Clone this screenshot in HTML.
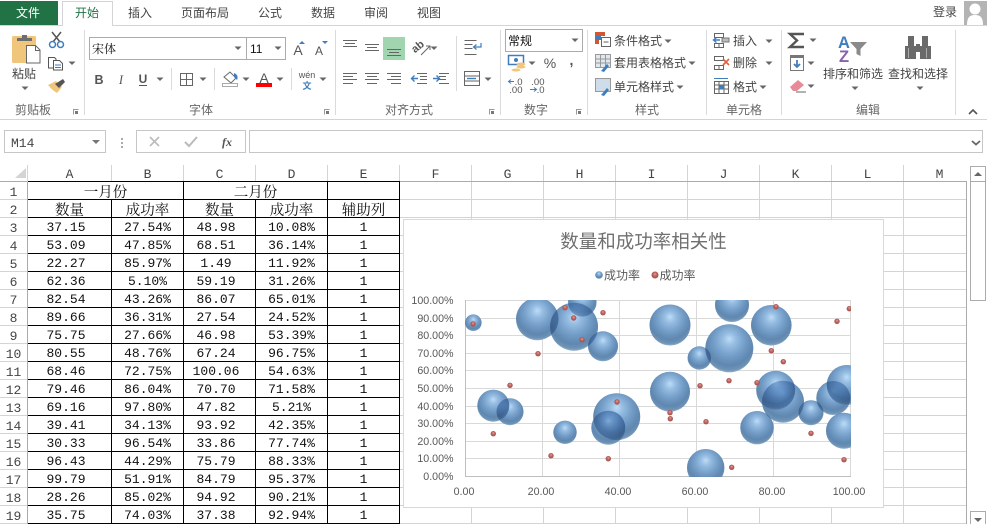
<!DOCTYPE html>
<html lang="zh"><head><meta charset="utf-8"><title>Excel</title>
<style>
html,body{margin:0;padding:0;background:#fff;overflow:hidden}
#p{position:relative;width:987px;height:524px;overflow:hidden;background:#fff;font-family:"Liberation Sans","Noto Sans CJK SC",sans-serif}
svg{position:absolute;left:0;top:0}
#g{position:absolute;left:400px;top:182px;width:566px;height:342px;background:linear-gradient(to bottom,transparent 17px,#d4d4d4 17px) 0 0/100% 18px,linear-gradient(to right,transparent 71px,#d4d4d4 71px) 0 0/72px 100%}
#r{position:absolute;left:0;top:182px;width:27px;height:342px;overflow:hidden}
#r div{height:18px;box-sizing:border-box;border-bottom:1px solid #d4d4d4;text-align:center;font:13px/21px "Liberation Mono",monospace;color:#444}
table{position:absolute;left:27px;top:181px;width:373px;box-sizing:border-box;table-layout:fixed;border-collapse:separate;border-spacing:0;border-left:1px solid #000;border-top:1px solid #000;background:#fff}
tr{height:18px}
td{height:18px;box-sizing:border-box;padding:3px 0 0;border-right:1px solid #000;border-bottom:1px solid #000;text-align:center;font:13px/14px "Liberation Mono",monospace;color:#111;overflow:hidden;white-space:nowrap}
td.n{padding-right:7px}
td.h{font:14.5px/15px "Noto Serif CJK SC",serif;padding-top:2px}
text{font-family:"Liberation Sans","Noto Sans CJK SC",sans-serif}
.t{font-size:12px;fill:#444}
.m{font-family:"Liberation Mono",monospace;font-size:13px;fill:#444}
.a{font-size:10.67px;fill:#595959}
#bub circle{mix-blend-mode:multiply}
</style></head><body><div id="p">
<div id="g"></div>
<div id="r"><div>1</div><div>2</div><div>3</div><div>4</div><div>5</div><div>6</div><div>7</div><div>8</div><div>9</div><div>10</div><div>11</div><div>12</div><div>13</div><div>14</div><div>15</div><div>16</div><div>17</div><div>18</div><div>19</div></div>
<table><colgroup><col style="width:84px"><col style="width:72px"><col style="width:72px"><col style="width:72px"><col style="width:72px"></colgroup>
<tr><td class="h" colspan="2">一月份</td><td class="h" colspan="2">二月份</td><td></td></tr>
<tr><td class="h">数量</td><td class="h">成功率</td><td class="h">数量</td><td class="h">成功率</td><td class="h">辅助列</td></tr>
<tr><td class="n">37.15</td><td>27.54%</td><td class="n">48.98</td><td>10.08%</td><td>1</td></tr>
<tr><td class="n">53.09</td><td>47.85%</td><td class="n">68.51</td><td>36.14%</td><td>1</td></tr>
<tr><td class="n">22.27</td><td>85.97%</td><td class="n">1.49</td><td>11.92%</td><td>1</td></tr>
<tr><td class="n">62.36</td><td>5.10%</td><td class="n">59.19</td><td>31.26%</td><td>1</td></tr>
<tr><td class="n">82.54</td><td>43.26%</td><td class="n">86.07</td><td>65.01%</td><td>1</td></tr>
<tr><td class="n">89.66</td><td>36.31%</td><td class="n">27.54</td><td>24.52%</td><td>1</td></tr>
<tr><td class="n">75.75</td><td>27.66%</td><td class="n">46.98</td><td>53.39%</td><td>1</td></tr>
<tr><td class="n">80.55</td><td>48.76%</td><td class="n">67.24</td><td>96.75%</td><td>1</td></tr>
<tr><td class="n">68.46</td><td>72.75%</td><td class="n">100.06</td><td>54.63%</td><td>1</td></tr>
<tr><td class="n">79.46</td><td>86.04%</td><td class="n">70.70</td><td>71.58%</td><td>1</td></tr>
<tr><td class="n">69.16</td><td>97.80%</td><td class="n">47.82</td><td>5.21%</td><td>1</td></tr>
<tr><td class="n">39.41</td><td>34.13%</td><td class="n">93.92</td><td>42.35%</td><td>1</td></tr>
<tr><td class="n">30.33</td><td>96.54%</td><td class="n">33.86</td><td>77.74%</td><td>1</td></tr>
<tr><td class="n">96.43</td><td>44.29%</td><td class="n">75.79</td><td>88.33%</td><td>1</td></tr>
<tr><td class="n">99.79</td><td>51.91%</td><td class="n">84.79</td><td>95.37%</td><td>1</td></tr>
<tr><td class="n">28.26</td><td>85.02%</td><td class="n">94.92</td><td>90.21%</td><td>1</td></tr>
<tr><td class="n">35.75</td><td>74.03%</td><td class="n">37.38</td><td>92.94%</td><td>1</td></tr>
</table>

<svg width="987" height="524" viewBox="0 0 987 524">
<defs>
<radialGradient id="b" cx=".5" cy=".38" r=".66" fx=".5" fy=".3">
<stop offset="0" stop-color="#bcdcf8"/><stop offset=".2" stop-color="#94bce2"/><stop offset=".5" stop-color="#6f9ac6"/><stop offset=".75" stop-color="#5a84ae"/><stop offset=".88" stop-color="#6a90b4"/><stop offset="1" stop-color="#adc6de"/>
</radialGradient>
<radialGradient id="d" cx=".5" cy=".5" r=".5" fx=".5" fy=".3">
<stop offset="0" stop-color="#e2a09c"/><stop offset=".6" stop-color="#bc5e5a"/><stop offset="1" stop-color="#a05450"/>
</radialGradient>
<clipPath id="c"><rect x="465" y="300" width="386" height="177"/></clipPath>
<g id="ar"><path d="M-3.500-1.500h7L0 2z" fill="#666"/></g>
</defs>

<!-- title bar / tabs -->
<rect x="0" y="1" width="58" height="25" fill="#217346"/>
<rect x="0" y="25" width="987" height="1" fill="#d4d4d4"/>
<path d="M62.500 26V1.500H112.500V26" fill="#fff" stroke="#d4d4d4"/>
<rect x="63" y="25" width="49" height="1" fill="#fff"/>
<text x="28" y="17" text-anchor="middle" class="t" style="fill:#fff">文件</text>
<text x="87" y="17" text-anchor="middle" class="t" style="fill:#217346">开始</text>
<text x="140" y="17" text-anchor="middle" class="t">插入</text>
<text x="205" y="17" text-anchor="middle" class="t">页面布局</text>
<text x="270" y="17" text-anchor="middle" class="t">公式</text>
<text x="323" y="17" text-anchor="middle" class="t">数据</text>
<text x="376" y="17" text-anchor="middle" class="t">审阅</text>
<text x="429" y="17" text-anchor="middle" class="t">视图</text>
<text x="945" y="16" text-anchor="middle" class="t">登录</text>
<rect x="964" y="1" width="23" height="24" fill="#b4b4b4"/>
<circle cx="975" cy="9" r="5.500" fill="#fff"/><path d="M967 25c0-8 3-10 8-10s8 2 8 10z" fill="#fff"/>

<!-- ribbon separators -->
<rect x="0" y="119" width="987" height="1" fill="#d4d4d4"/>
<g fill="#dadada">
<rect x="84" y="30" width="1" height="85"/><rect x="335" y="30" width="1" height="85"/><rect x="500" y="30" width="1" height="85"/><rect x="587" y="30" width="1" height="85"/><rect x="706" y="30" width="1" height="85"/><rect x="781" y="30" width="1" height="85"/><rect x="955" y="30" width="1" height="85"/>
<rect x="171" y="68" width="1" height="22"/><rect x="214" y="68" width="1" height="22"/><rect x="291" y="68" width="1" height="22"/><rect x="456" y="36" width="1" height="55"/>
</g>
<g text-anchor="middle">
<text x="33" y="114" class="t" style="fill:#666">剪贴板</text>
<text x="201" y="114" class="t" style="fill:#666">字体</text>
<text x="409" y="114" class="t" style="fill:#666">对齐方式</text>
<text x="536" y="114" class="t" style="fill:#666">数字</text>
<text x="647" y="114" class="t" style="fill:#666">样式</text>
<text x="744" y="114" class="t" style="fill:#666">单元格</text>
<text x="868" y="114" class="t" style="fill:#666">编辑</text>
</g>
<g fill="none" stroke="#999">
<path d="M73.500 114.500v-5h5M324.500 114.500v-5h5M489.500 114.500v-5h5M576.500 114.500v-5h5"/>
</g>
<g fill="#777"><rect x="75" y="111" width="3" height="3"/><rect x="326" y="111" width="3" height="3"/><rect x="491" y="111" width="3" height="3"/><rect x="578" y="111" width="3" height="3"/></g>
<path d="M969 114l4-4 4 4" fill="none" stroke="#555" stroke-width="1.600"/>

<!-- clipboard -->
<rect x="12" y="36" width="24" height="27" rx="1.500" fill="#efc67c"/>
<path d="M17 41v-3h5v-3h5v3h5v3z" fill="#6e6e6e"/>
<path d="M26.500 45.500h9l4.500 4.500v13h-13.500z" fill="#fff" stroke="#666"/>
<path d="M35.500 45.500v5h4.500" fill="none" stroke="#666"/>
<text x="24" y="78" text-anchor="middle" style="font-size:12px;fill:#444">粘贴</text>
<use href="#ar" x="25" y="88"/>
<path d="M52 32l8 10M61 32l-8 10" stroke="#555" stroke-width="1.500" fill="none"/>
<circle cx="52.500" cy="44.500" r="3" fill="none" stroke="#3f7dbd" stroke-width="1.500"/><circle cx="60.500" cy="44.500" r="3" fill="none" stroke="#3f7dbd" stroke-width="1.500"/>
<path d="M48.500 57.500h6l1.500 1.500v9h-7.500z" fill="#fff" stroke="#555"/><path d="M53.500 60.500h6l3 3v6.500h-9z" fill="#fff" stroke="#555"/><path d="M55 65h6M55 67.500h6" stroke="#3f7dbd"/>
<use href="#ar" x="72" y="63"/>
<path d="M48 85l8-4 6 6-5 6q-5-3-9-8z" fill="#efc67c"/><path d="M55 84l8-5 2 3-6 6z" fill="#555"/>

<!-- font -->
<rect x="89.500" y="37.500" width="196" height="22" fill="#fff" stroke="#ababab"/>
<rect x="246" y="38" width="1" height="21" fill="#ababab"/>
<text x="92" y="53" style="font-size:12px;fill:#111;font-family:'Noto Serif CJK SC',serif">宋体</text>
<text x="250" y="53" style="font-size:12px;fill:#111">11</text>
<use href="#ar" x="238" y="48"/><use href="#ar" x="278" y="48"/>
<text x="298" y="55" text-anchor="middle" style="font-size:14px;fill:#555">A</text><path d="M299 44l3-3 3 3z" fill="#3f7dbd"/>
<text x="319" y="55" text-anchor="middle" style="font-size:12px;fill:#555">A</text><path d="M322 41h6l-3 3z" fill="#3f7dbd"/>
<text x="99" y="84" text-anchor="middle" style="font-size:12.500px;font-weight:bold;fill:#555">B</text>
<text x="121" y="84" text-anchor="middle" style="font-size:12.500px;font-style:italic;fill:#555;font-family:'Liberation Serif',serif">I</text>
<text x="143" y="83" text-anchor="middle" style="font-size:12px;font-weight:bold;fill:#555">U</text><rect x="139" y="85" width="8" height="1" fill="#555"/>
<use href="#ar" x="160" y="79"/>
<path d="M180.500 73.500h12v12h-12zM186.500 73.500v12M180.500 79.500h12" fill="none" stroke="#666"/>
<use href="#ar" x="203" y="79"/>
<path d="M224 77l6-5 6 6-5 5z" fill="#fff" stroke="#666"/><path d="M234 73q5 2 3 7l-3-3z" fill="#3f7dbd"/><rect x="222.500" y="83.500" width="15" height="3" fill="#fff" stroke="#aaa"/>
<use href="#ar" x="246" y="79"/>
<text x="264" y="83" text-anchor="middle" style="font-size:14px;fill:#555">A</text><rect x="256" y="83" width="16" height="4" fill="#f00"/>
<use href="#ar" x="280" y="79"/>
<text x="307" y="78" text-anchor="middle" style="font-size:9px;fill:#555">wén</text>
<text x="307" y="89" text-anchor="middle" style="font-size:9px;fill:#3f7dbd;font-weight:bold">文</text>
<use href="#ar" x="323" y="79"/>

<!-- alignment -->
<rect x="383" y="37" width="22" height="23" fill="#a0d5b0"/>
<g stroke="#666" fill="none">
<path d="M343 40.500h14M345 43.500h10M343 46.500h14"/>
<path d="M365 44.500h14M367 47.500h10M365 50.500h14"/>
<path d="M387 49.500h14M389 52.500h10M387 55.500h14"/>
<path d="M343 73.500h14M343 76.500h10M343 79.500h14M343 83.500h10"/>
<path d="M365 73.500h14M367 76.500h10M365 79.500h14M367 83.500h10"/>
<path d="M387 73.500h14M391 76.500h10M387 79.500h14M391 83.500h10"/>
<path d="M417 73.500h10M420 76.500h7M420 79.500h7M417 83.500h10"/>
<path d="M439 73.500h10M439 76.500h7M439 79.500h7M439 83.500h10"/>
<path d="M464.500 40.500h12M464.500 44.500h8M464.500 48.500h8M464.500 54.500h12"/>
<rect x="464.500" y="71.500" width="15" height="14"/><path d="M464.500 76h15M464.500 81h15"/>
</g>
<text x="418" y="50" text-anchor="middle" transform="rotate(-40 418 47)" style="font-size:11px;font-weight:bold;fill:#555">ab</text>
<path d="M421 55l9-9m-4 0h4v4" stroke="#666" fill="none"/>
<use href="#ar" x="434" y="48"/>
<path d="M418 78.500h-6m2.500-3l-3 3 3 3" stroke="#3f7dbd" stroke-width="1.400" fill="none"/>
<path d="M433 78.500h6m-2.500-3l3 3-3 3" stroke="#3f7dbd" stroke-width="1.400" fill="none"/>
<path d="M481 43v4h-7m2.500-2.500l-3 2.500 3 2.500" stroke="#3f7dbd" stroke-width="1.200" fill="none"/>
<path d="M467 78.500h9" stroke="#3f7dbd" stroke-width="1.400"/>
<use href="#ar" x="488" y="79"/>

<!-- number -->
<rect x="505.500" y="29.500" width="77" height="22" fill="#fff" stroke="#ababab"/>
<text x="508" y="45" style="font-size:12px;fill:#111">常规</text>
<use href="#ar" x="575" y="40"/>
<rect x="508.500" y="55.500" width="15" height="9" fill="#fff" stroke="#3f7dbd" stroke-width="1.500"/><circle cx="516" cy="60" r="2" fill="#3f7dbd"/>
<ellipse cx="521" cy="64" rx="4.500" ry="1.500" fill="#efc67c"/><ellipse cx="521" cy="67" rx="4.500" ry="1.500" fill="#efc67c"/><ellipse cx="516" cy="70" rx="4.500" ry="1.500" fill="#efc67c"/>
<use href="#ar" x="532" y="63"/>
<text x="550" y="68" text-anchor="middle" style="font-size:14px;fill:#555">%</text>
<text x="571.500" y="65" text-anchor="middle" style="font-size:14px;font-weight:bold;fill:#555">,</text>
<text x="522.500" y="85" text-anchor="end" style="font-size:9.500px;fill:#555">.0</text>
<text x="522.500" y="93" text-anchor="end" style="font-size:9.500px;fill:#555">.00</text>
<path d="M514 81.500h-5m2-2l-2.500 2 2.500 2" stroke="#3f7dbd" fill="none"/>
<text x="544.500" y="85" text-anchor="end" style="font-size:9.500px;fill:#555">.00</text>
<text x="544.500" y="93" text-anchor="end" style="font-size:9.500px;fill:#555">.0</text>
<path d="M530 89.500h6m-2-2l2.500 2-2.500 2" stroke="#3f7dbd" fill="none"/>

<!-- styles -->
<rect x="595" y="32" width="10" height="4" fill="#d2562f"/><rect x="595" y="36" width="6" height="4" fill="#3f7dbd"/><rect x="595" y="40" width="4" height="4" fill="#d2562f"/>
<rect x="601.500" y="37.500" width="9" height="9" fill="#fff" stroke="#666"/><path d="M603.500 42h5" stroke="#666"/>
<path d="M595.500 54.500h15v13h-15zM600.500 54.500v13M605.500 54.500v13M595.500 59h15M595.500 63h15" fill="#dfe7f0" stroke="#999"/><path d="M601 71l6-7 2 2-5 6z" fill="#3f7dbd"/>
<rect x="595.500" y="78.500" width="15" height="13" fill="#cfdcea" stroke="#999"/><path d="M601 95l6-7 2 2-5 6z" fill="#3f7dbd"/>
<text x="614" y="45" class="t">条件格式</text><use href="#ar" x="668" y="41"/>
<text x="614" y="67" class="t">套用表格格式</text><use href="#ar" x="692" y="63"/>
<text x="614" y="91" class="t">单元格样式</text><use href="#ar" x="680" y="87"/>

<!-- cells -->
<g fill="none" stroke="#666">
<path d="M714.500 33.500h9v4h-9zM714.500 43.500h9v4h-9zM719 43.500v4"/>
<path d="M714.500 56.500h9v4h-9zM714.500 65.500h9v4h-9zM719 65.500v4"/>
<rect x="714.500" y="81.500" width="14" height="12"/><path d="M714.500 85h14M714.500 89h14M719 81.500v12M724 81.500v12"/>
</g>
<path d="M720 40h-6m2.500-2.500l-3 2.500 3 2.500" stroke="#3f7dbd" stroke-width="1.400" fill="none"/><rect x="722" y="38" width="7" height="4" fill="#bbb" stroke="#777"/>
<path d="M723 59l6 6m0-6l-6 6" stroke="#e0603c" stroke-width="1.600"/>
<rect x="719" y="85" width="5" height="4" fill="#3f7dbd"/><path d="M714 78.500h14" stroke="#3f7dbd"/>
<text x="733" y="45" class="t">插入</text><use href="#ar" x="769" y="41"/>
<text x="733" y="67" class="t">删除</text><use href="#ar" x="769" y="63"/>
<text x="733" y="91" class="t">格式</text><use href="#ar" x="763" y="87"/>

<!-- editing -->
<path d="M804 34h-14l7 6.500-7 6.500h14" fill="none" stroke="#555" stroke-width="2.400"/>
<use href="#ar" x="813" y="40"/>
<rect x="790.500" y="55.500" width="13" height="15" fill="#fff" stroke="#777"/><rect x="790" y="55" width="14" height="3" fill="#777"/>
<path d="M797 60v7m-3-3l3 3 3-3" stroke="#3f7dbd" stroke-width="1.800" fill="none"/>
<use href="#ar" x="811" y="63"/>
<path d="M790 87l8-7 6 5-7 6h-4z" fill="#e88a98"/><path d="M796 92h10" stroke="#666"/>
<use href="#ar" x="811" y="86"/>
<text x="844" y="48" text-anchor="middle" style="font-size:16.500px;font-weight:bold;fill:#3f7dbd">A</text>
<text x="844" y="62" text-anchor="middle" style="font-size:16.500px;font-weight:bold;fill:#8a5fb0">Z</text>
<path d="M850 42h17l-6.500 7v7l-4-2v-5z" fill="#8a8a8a"/>
<path d="M908 36h6v10h2v13h-11v-13h3zM922 36h6v10h3v13h-11v-13h2z" fill="#6a6a6a"/><rect x="916" y="44" width="4" height="8" fill="#6a6a6a"/>
<path d="M908.500 48v10M926.500 48v10" stroke="#aaa"/>
<text x="853" y="78" text-anchor="middle" class="t">排序和筛选</text><use href="#ar" x="855" y="88"/>
<text x="918" y="78" text-anchor="middle" class="t">查找和选择</text><use href="#ar" x="920" y="88"/>

<!-- formula bar -->
<rect x="4.500" y="130.500" width="101" height="22" fill="#fff" stroke="#c6c6c6"/>
<text x="11" y="147" class="m">M14</text>
<path d="M92 140h8l-4 4z" fill="#777"/>
<g fill="#aaa"><rect x="121" y="138" width="2" height="2"/><rect x="121" y="142" width="2" height="2"/><rect x="121" y="146" width="2" height="2"/></g>
<rect x="136.500" y="130.500" width="109" height="22" fill="#fff" stroke="#c6c6c6"/>
<path d="M150 137l9 9m0-9l-9 9" stroke="#bbb" stroke-width="1.600"/>
<path d="M185 142l4 4 8-9" stroke="#bbb" stroke-width="2" fill="none"/>
<text x="227" y="146" text-anchor="middle" style="font-family:'Liberation Serif',serif;font-style:italic;font-weight:bold;font-size:12px;fill:#555">fx</text>
<rect x="249.500" y="130.500" width="733" height="22" fill="#fff" stroke="#c6c6c6"/>
<path d="M972 141l4 3.500 4-3.500" stroke="#666" stroke-width="1.800" fill="none"/>

<!-- col headers -->
<rect x="0" y="181" width="27" height="1" fill="#ababab"/><rect x="400" y="181" width="567" height="1" fill="#ababab"/>
<rect x="27" y="165" width="1" height="17" fill="#d4d4d4"/><rect x="27" y="182" width="1" height="342" fill="#ababab"/>
<rect x="966" y="181" width="1" height="343" fill="#ababab"/>
<path d="M26 168v10H15z" fill="#d4d4d4"/>
<g fill="#d4d4d4"><rect x="111" y="165" width="1" height="16"/><rect x="183" y="165" width="1" height="16"/><rect x="255" y="165" width="1" height="16"/><rect x="327" y="165" width="1" height="16"/><rect x="399" y="165" width="1" height="16"/><rect x="471" y="165" width="1" height="16"/><rect x="543" y="165" width="1" height="16"/><rect x="615" y="165" width="1" height="16"/><rect x="687" y="165" width="1" height="16"/><rect x="759" y="165" width="1" height="16"/><rect x="831" y="165" width="1" height="16"/><rect x="903" y="165" width="1" height="16"/></g>
<g text-anchor="middle">
<text x="69.500" y="178" class="m">A</text><text x="147.500" y="178" class="m">B</text><text x="219.500" y="178" class="m">C</text><text x="291.500" y="178" class="m">D</text><text x="363.500" y="178" class="m">E</text><text x="435.500" y="178" class="m">F</text><text x="507.500" y="178" class="m">G</text><text x="579.500" y="178" class="m">H</text><text x="651.500" y="178" class="m">I</text><text x="723.500" y="178" class="m">J</text><text x="795.500" y="178" class="m">K</text><text x="867.500" y="178" class="m">L</text><text x="939.500" y="178" class="m">M</text>
</g>

<!-- scrollbar -->
<rect x="970.500" y="166.500" width="15" height="15" fill="#fff" stroke="#ababab"/>
<path d="M974 176l4-4 4 4z" fill="#666"/>
<rect x="970.500" y="181.500" width="15" height="119" fill="#fff" stroke="#ababab"/>
<rect x="970.500" y="511.500" width="15" height="13" fill="#fff" stroke="#ababab"/>
<path d="M974 518h8l-4 4z" fill="#666"/>

<!-- chart -->
<rect x="403.500" y="219.500" width="480" height="288" fill="#fff" stroke="#d9d9d9"/>
<text x="643.500" y="248" text-anchor="middle" style="font-size:18.500px;fill:#707070">数量和成功率相关性</text>
<circle cx="599" cy="275" r="3.800" fill="url(#b)"/><text x="604" y="279.500" style="font-size:12px;fill:#595959">成功率</text>
<circle cx="655" cy="275" r="3.500" fill="url(#d)"/><text x="659.500" y="279.500" style="font-size:12px;fill:#595959">成功率</text>
<g stroke="#d9d9d9" fill="none">
<path d="M465 300.500h386M465 318.500h386M465 335.500h386M465 353.500h386M465 370.500h386M465 388.500h386M465 406.500h386M465 423.500h386M465 441.500h386M465 458.500h386"/>
<path d="M542.500 300v176M619.500 300v176M696.500 300v176M773.500 300v176M850.500 300v176"/>
</g>
<path d="M465.500 300v176.500H851" stroke="#bfbfbf" fill="none"/>
<g text-anchor="end">
<text x="453.500" y="304" class="a">100.00%</text><text x="453.500" y="322" class="a">90.00%</text><text x="453.500" y="339" class="a">80.00%</text><text x="453.500" y="357" class="a">70.00%</text><text x="453.500" y="374" class="a">60.00%</text><text x="453.500" y="392" class="a">50.00%</text><text x="453.500" y="410" class="a">40.00%</text><text x="453.500" y="427" class="a">30.00%</text><text x="453.500" y="445" class="a">20.00%</text><text x="453.500" y="462" class="a">10.00%</text><text x="453.500" y="480" class="a">0.00%</text>
</g>
<g text-anchor="middle">
<text x="464" y="495" class="a">0.00</text><text x="541" y="495" class="a">20.00</text><text x="618" y="495" class="a">40.00</text><text x="695" y="495" class="a">60.00</text><text x="772" y="495" class="a">80.00</text><text x="849" y="495" class="a">100.00</text>
</g>
<g clip-path="url(#c)">
<g id="bub" fill="url(#b)" opacity=".95" style="isolation:isolate">
<circle cx="473.300" cy="322.700" r="8.300"/><circle cx="582.300" cy="302.500" r="14.200"/><circle cx="537.300" cy="319" r="21.300"/><circle cx="574" cy="326.700" r="24"/><circle cx="603" cy="346.300" r="15"/><circle cx="670" cy="325" r="20.500"/><circle cx="732" cy="305" r="17"/><circle cx="771.300" cy="325.300" r="20.300"/><circle cx="699.300" cy="358" r="11.700"/><circle cx="729.300" cy="348.300" r="24"/><circle cx="670" cy="391.700" r="20"/><circle cx="705.700" cy="467.700" r="18.700"/><circle cx="757" cy="427.700" r="16.700"/><circle cx="783" cy="401.700" r="21"/><circle cx="775.700" cy="390.300" r="19.500"/><circle cx="811" cy="412.700" r="12.500"/><circle cx="833.300" cy="398" r="17"/><circle cx="846.700" cy="385" r="20"/><circle cx="844" cy="430.700" r="18"/><circle cx="510" cy="411.700" r="13.500"/><circle cx="493.300" cy="405.700" r="16"/><circle cx="565" cy="432.300" r="11.700"/><circle cx="616.700" cy="416.700" r="23.500"/><circle cx="608.300" cy="427.700" r="17"/>
</g>
<g fill="url(#b)" opacity=".35">
<circle cx="473.300" cy="322.700" r="8.300"/><circle cx="582.300" cy="302.500" r="14.200"/><circle cx="537.300" cy="319" r="21.300"/><circle cx="574" cy="326.700" r="24"/><circle cx="603" cy="346.300" r="15"/><circle cx="670" cy="325" r="20.500"/><circle cx="732" cy="305" r="17"/><circle cx="771.300" cy="325.300" r="20.300"/><circle cx="699.300" cy="358" r="11.700"/><circle cx="729.300" cy="348.300" r="24"/><circle cx="670" cy="391.700" r="20"/><circle cx="705.700" cy="467.700" r="18.700"/><circle cx="757" cy="427.700" r="16.700"/><circle cx="783" cy="401.700" r="21"/><circle cx="775.700" cy="390.300" r="19.500"/><circle cx="811" cy="412.700" r="12.500"/><circle cx="833.300" cy="398" r="17"/><circle cx="846.700" cy="385" r="20"/><circle cx="844" cy="430.700" r="18"/><circle cx="510" cy="411.700" r="13.500"/><circle cx="493.300" cy="405.700" r="16"/><circle cx="565" cy="432.300" r="11.700"/><circle cx="616.700" cy="416.700" r="23.500"/><circle cx="608.300" cy="427.700" r="17"/>
</g>
<g fill="url(#d)">
<circle cx="473" cy="324" r="2.700"/><circle cx="565" cy="307.700" r="2.700"/><circle cx="573.700" cy="318" r="2.700"/><circle cx="582" cy="339.700" r="2.700"/><circle cx="603" cy="312.700" r="2.700"/><circle cx="538" cy="353.700" r="2.700"/><circle cx="776" cy="306.700" r="2.700"/><circle cx="849.300" cy="308.700" r="2.700"/><circle cx="837" cy="321.300" r="2.700"/><circle cx="771.300" cy="350.700" r="2.700"/><circle cx="783.300" cy="361.700" r="2.700"/><circle cx="700" cy="385.700" r="2.700"/><circle cx="729" cy="380.700" r="2.700"/><circle cx="757" cy="382.700" r="2.700"/><circle cx="706" cy="421.700" r="2.700"/><circle cx="731.700" cy="467.300" r="2.700"/><circle cx="811" cy="433.300" r="2.700"/><circle cx="844" cy="459.700" r="2.700"/><circle cx="510" cy="385.300" r="2.700"/><circle cx="493.300" cy="433.700" r="2.700"/><circle cx="551" cy="455.700" r="2.700"/><circle cx="617" cy="402" r="2.700"/><circle cx="608.300" cy="458.700" r="2.700"/><circle cx="670" cy="412.700" r="2.700"/><circle cx="670.300" cy="418.700" r="2.700"/>
</g>
</g>
</svg>
</div></body></html>
